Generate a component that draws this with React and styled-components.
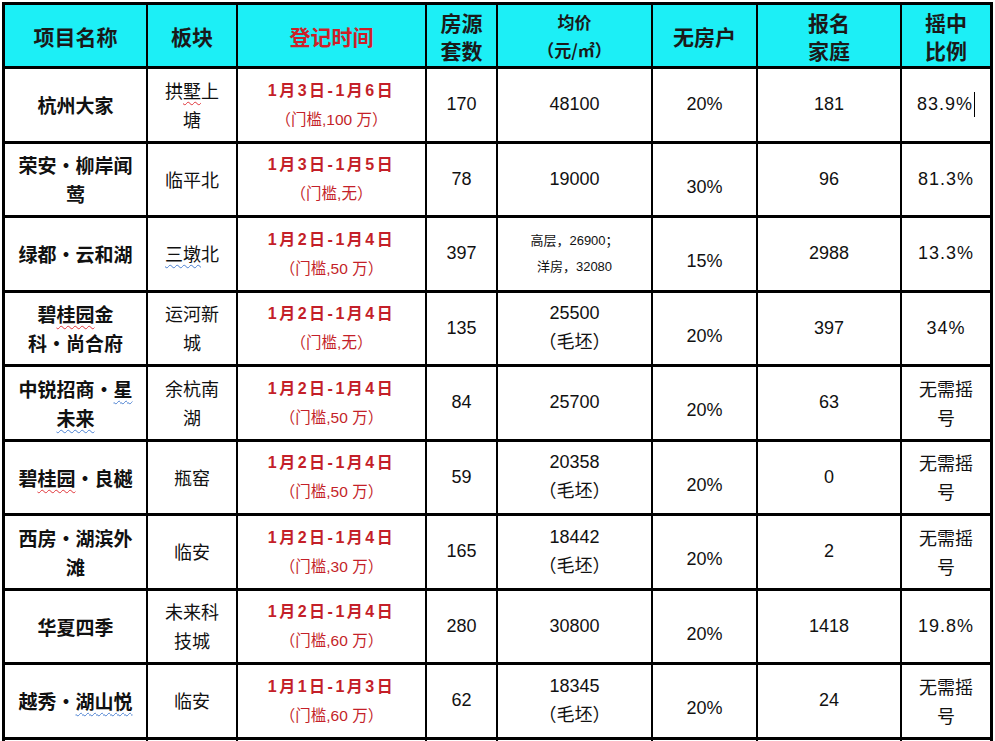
import React from "react";
import styled, { createGlobalStyle } from "styled-components";

const Global = createGlobalStyle`
  html, body {
    margin: 0;
    padding: 0;
    background: #ffffff;
    overflow: hidden;
  }
  body {
    font-family: "Liberation Sans", "Noto Sans CJK SC", sans-serif;
    color: #111;
  }
`;

const Sheet = styled.div`
  margin: 2px 0 0 2px;
  width: 991px;
  height: 739px;
  overflow: hidden;
  box-sizing: border-box;
  background: #000;
  border: 3px solid #000;
  border-bottom: none;
  display: grid;
  grid-template-columns: 141px 88px 187px 69px 153px 103px 142px 88px;
  grid-template-rows: 61px repeat(10, 71.5px);
  column-gap: 2px;
  row-gap: 3px;
`;

const Cell = styled.div`
  background: #fff;
  display: flex;
  flex-direction: column;
  align-items: center;
  justify-content: center;
  text-align: center;
  box-sizing: border-box;
  padding: ${(p) => (p.$drop ? "16px 6px 0" : "0 6px")};
  font-size: 18px;
  line-height: 29px;
`;

const Head = styled(Cell)`
  background: #1ceff6;
  font-family: "Noto Sans CJK SC", sans-serif;
  font-weight: 700;
  font-size: ${(p) => (p.$small ? "17px" : "21px")};
  line-height: 28px;
  color: ${(p) => (p.$red ? "#cf1f28" : "#1a1a1a")};
`;

const Name = styled(Cell)`
  font-family: "Noto Sans CJK SC", sans-serif;
  font-weight: 700;
  font-size: 19px;
`;

const Area = styled(Cell)`
  font-family: "Noto Sans CJK SC", sans-serif;
  font-size: 18px;
`;

const Dates = styled(Cell)`
  color: #c41f29;
`;

const DateMain = styled.div`
  font-family: "Liberation Sans", "Noto Sans CJK SC", sans-serif;
  font-weight: 700;
  font-size: 16px;
  letter-spacing: 2.5px;
`;

const DateNote = styled.div`
  font-family: "Liberation Sans", "Noto Sans CJK SC", sans-serif;
  font-size: 15.5px;
`;

const Small = styled.div`
  font-size: 13px;
  line-height: 26px;
`;

const Ratio = styled(Cell)`
  letter-spacing: 1px;
  flex-direction: row;
`;

const Caret = styled.span`
  display: inline-block;
  width: 1px;
  height: 25px;
  background: #000;
  margin-left: 1px;
`;

const Wavy = styled.span`
  text-decoration: underline wavy ${(p) => (p.$c === "red" ? "#e0353a" : "#4a7fd0")};
  text-decoration-thickness: 1px;
  text-underline-offset: 3px;
`;

const heads = [
  { t: <>项目名称</> },
  { t: <>板块</> },
  { t: <>登记时间</>, red: true },
  { t: <>房源<br />套数</> },
  { t: <>均价<br />（元/㎡）</>, small: true },
  { t: <>无房户</> },
  { t: <>报名<br />家庭</> },
  { t: <>摇中<br />比例</> },
];

const rows = [
  {
    name: <>杭州大家</>,
    area: <>拱<Wavy $c="red">墅</Wavy>上<br />塘</>,
    date: "1月3日-1月6日",
    note: "（门槛,100 万）",
    units: "170",
    price: <>48100</>,
    share: "20%",
    first: true,
    fam: "181",
    ratio: "83.9%",
    caret: true,
  },
  {
    name: <>荣安・柳岸闻<br />莺</>,
    area: <>临平北</>,
    date: "1月3日-1月5日",
    note: "（门槛,无）",
    units: "78",
    price: <>19000</>,
    share: "30%",
    fam: "96",
    ratio: "81.3%",
  },
  {
    name: <>绿都・云和湖</>,
    area: <><Wavy $c="blue">三墩</Wavy>北</>,
    date: "1月2日-1月4日",
    note: "（门槛,50 万）",
    units: "397",
    price: <Small>高层，26900；<br />洋房，32080</Small>,
    share: "15%",
    fam: "2988",
    ratio: "13.3%",
  },
  {
    name: <>碧<Wavy $c="red">桂园</Wavy>金<br />科・尚合府</>,
    area: <>运河新<br />城</>,
    date: "1月2日-1月4日",
    note: "（门槛,无）",
    units: "135",
    price: <>25500<br />（毛坯）</>,
    share: "20%",
    fam: "397",
    ratio: "34%",
  },
  {
    name: <>中锐招商・<Wavy $c="blue">星</Wavy><br /><Wavy $c="blue">未来</Wavy></>,
    area: <>余杭南<br />湖</>,
    date: "1月2日-1月4日",
    note: "（门槛,50 万）",
    units: "84",
    price: <>25700</>,
    share: "20%",
    fam: "63",
    ratio: <>无需摇<br />号</>,
  },
  {
    name: <>碧<Wavy $c="red">桂园</Wavy>・良樾</>,
    area: <>瓶窑</>,
    date: "1月2日-1月4日",
    note: "（门槛,50 万）",
    units: "59",
    price: <>20358<br />（毛坯）</>,
    share: "20%",
    fam: "0",
    ratio: <>无需摇<br />号</>,
  },
  {
    name: <>西房・湖滨外<br />滩</>,
    area: <>临安</>,
    date: "1月2日-1月4日",
    note: "（门槛,30 万）",
    units: "165",
    price: <>18442<br />（毛坯）</>,
    share: "20%",
    fam: "2",
    ratio: <>无需摇<br />号</>,
  },
  {
    name: <>华夏四季</>,
    area: <>未来科<br />技城</>,
    date: "1月2日-1月4日",
    note: "（门槛,60 万）",
    units: "280",
    price: <>30800</>,
    share: "20%",
    fam: "1418",
    ratio: "19.8%",
  },
  {
    name: <>越秀・<Wavy $c="blue">湖山悦</Wavy></>,
    area: <>临安</>,
    date: "1月1日-1月3日",
    note: "（门槛,60 万）",
    units: "62",
    price: <>18345<br />（毛坯）</>,
    share: "20%",
    fam: "24",
    ratio: <>无需摇<br />号</>,
  },
];

function Row({ r }) {
  const textRatio = typeof r.ratio === "string";
  return (
    <>
      <Name>
        <div>{r.name}</div>
      </Name>
      <Area>
        <div>{r.area}</div>
      </Area>
      <Dates>
        <DateMain>{r.date}</DateMain>
        <DateNote>{r.note}</DateNote>
      </Dates>
      <Cell>{r.units}</Cell>
      <Cell>
        <div>{r.price}</div>
      </Cell>
      <Cell $drop={!r.first}>{r.share}</Cell>
      <Cell>{r.fam}</Cell>
      {textRatio ? (
        <Ratio>
          {r.ratio}
          {r.caret && <Caret />}
        </Ratio>
      ) : (
        <Area>
          <div>{r.ratio}</div>
        </Area>
      )}
    </>
  );
}

export default function App() {
  return (
    <>
      <Global />
      <Sheet>
        {heads.map((h, i) => (
          <Head key={i} $red={h.red} $small={h.small}>
            <div>{h.t}</div>
          </Head>
        ))}
        {rows.map((r, i) => (
          <Row key={i} r={r} />
        ))}
        {heads.map((_, i) => (
          <Cell key={"e" + i} />
        ))}
      </Sheet>
    </>
  );
}
